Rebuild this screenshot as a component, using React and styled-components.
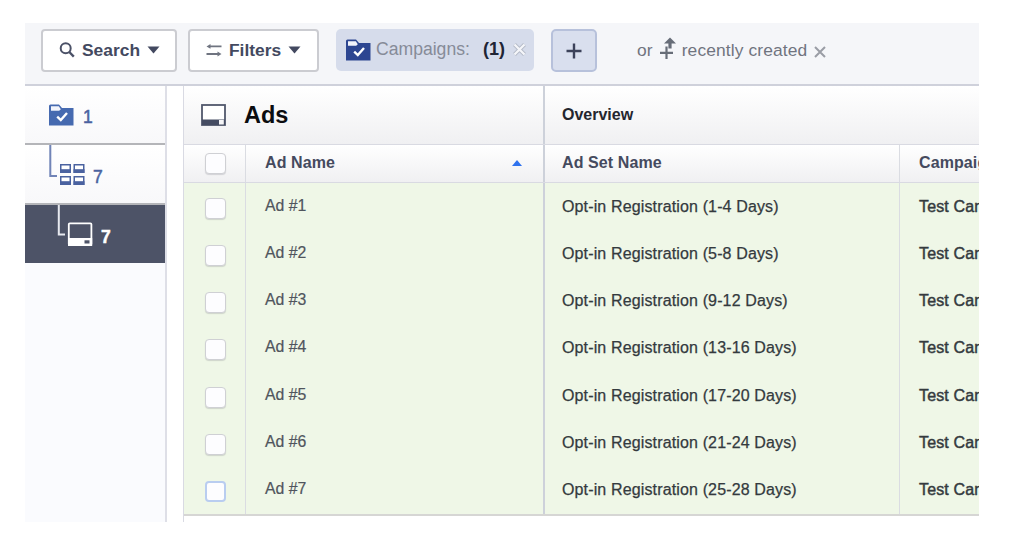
import React from 'react';
import styled, { createGlobalStyle } from 'styled-components';

const GlobalStyle = createGlobalStyle`
  * { box-sizing: border-box; }
  body { margin: 0; background: #fff; font-family: "Liberation Sans", Arial, sans-serif; }
  svg { display: block; flex: none; }
`;

const Page = styled.div`
  width: 1024px;
  height: 550px;
  padding: 23px 45px 28px 25px;
  overflow: hidden;
`;

const Panel = styled.div`
  width: 954px;
  height: 499px;
  display: flex;
  flex-direction: column;
  overflow: hidden;
`;

const Toolbar = styled.div`
  height: 63px;
  flex: none;
  display: flex;
  align-items: flex-start;
  padding: 6px 0 0 16px;
  background: #f5f6f9;
  border-bottom: 2px solid #cfd1db;
  white-space: nowrap;
`;

const MenuButton = styled.button`
  width: ${(p) => p.$width}px;
  height: 43px;
  margin-right: ${(p) => p.$gap}px;
  padding: 0 0 1px 16px;
  display: flex;
  align-items: center;
  gap: 7px;
  border: 2px solid #cbccd1;
  border-radius: 4px;
  background: #fff;
  color: #434960;
  font: bold 17.4px "Liberation Sans", Arial, sans-serif;
`;

const FilterTag = styled.div`
  width: 198px;
  height: 42px;
  margin-right: 17px;
  padding: 0 0 1px 10px;
  display: flex;
  align-items: center;
  border-radius: 5px;
  background: #d6dceb;
`;

const TagName = styled.span`
  width: 111px;
  padding-left: 5px;
  color: #868b98;
  font-size: 17.6px;
`;

const TagCount = styled.span`
  width: 31px;
  padding-left: 1px;
  color: #202434;
  font-size: 18px;
  font-weight: bold;
`;

const AddButton = styled.button`
  width: 46px;
  height: 43px;
  padding: 0;
  display: grid;
  place-items: center;
  border: 2px solid #b7c1db;
  border-radius: 5px;
  background: #d9dfee;
`;

const RecentHint = styled.div`
  height: 43px;
  margin-left: 40px;
  display: flex;
  align-items: center;
  color: #70747f;
  font-size: 17.4px;
  letter-spacing: 0.12px;
`;

const HintText = styled.span`
  padding-right: 7px;
`;

const PublishSlot = styled.span`
  width: 22px;
  padding-bottom: 6px;
`;

const CloseSlot = styled.span`
  padding-top: 3px;
`;

const Body = styled.div`
  flex: 1;
  display: flex;
  min-height: 0;
`;

const Sidebar = styled.nav`
  width: 142px;
  flex: none;
  border-right: 2px solid #dedfe7;
  background: #fafbfe;
`;

const Level = styled.div`
  height: ${(p) => p.$height}px;
  padding: ${(p) => p.$pad};
  display: flex;
  align-items: flex-start;
  gap: ${(p) => p.$gap}px;
  color: ${(p) => (p.$active ? '#fff' : '#4a62a0')};
  background: ${(p) => (p.$active ? '#4d5367' : 'linear-gradient(#fff, #f8f8fa)')};
  border-bottom: ${(p) => (p.$active ? '0' : '2px solid #b4b5b9')};
`;

const LevelCount = styled.span`
  padding-top: ${(p) => p.$top}px;
  font-size: 17.5px;
  line-height: 20px;
  font-weight: ${(p) => (p.$bold ? 'bold' : 'normal')};
  -webkit-text-stroke: 0.5px currentColor;
`;

const Table = styled.section`
  flex: 1;
  min-width: 0;
  margin-left: 16px;
  display: flex;
  flex-direction: column;
  border-left: 1px solid #d9dae3;
  overflow: hidden;
`;

const Row = styled.div`
  display: grid;
  grid-template-columns: 62px 299px 355px 79px;
  flex: ${(p) => (p.$height ? 'none' : '1')};
  height: ${(p) => (p.$height ? `${p.$height}px` : 'auto')};
  background: ${(p) => (p.$header ? 'linear-gradient(#fff, #f0f0f2)' : 'transparent')};
  border-bottom: ${(p) => (p.$header ? '1px solid #d9dae2' : '0')};
`;

const Rows = styled.div`
  height: 333px;
  flex: none;
  display: flex;
  flex-direction: column;
  background: #eff7e7;
  border-bottom: 2px solid #d6d6d4;
`;

const Cell = styled.div`
  display: flex;
  align-items: center;
  min-width: 0;
  overflow: hidden;
  white-space: nowrap;
  padding-left: ${(p) => p.$pad ?? 17}px;
  padding-bottom: ${(p) => p.$lift ?? 0}px;
  border-right: ${(p) => p.$rule ?? 0}px solid ${(p) => (p.$rule === 2 ? '#cdd1da' : '#dadce2')};
`;

const TitleCell = styled(Cell)`
  grid-column: span 2;
  gap: 18px;
`;

const OverviewCell = styled(Cell)`
  grid-column: span 2;
`;

const Title = styled.h1`
  margin: 0;
  font-size: 23.5px;
  line-height: 28px;
  color: #0b0c10;
`;

const GroupLabel = styled.span`
  font-size: 16px;
  font-weight: bold;
  color: #24262e;
`;

const ColumnLabel = styled.span`
  font-size: 16px;
  font-weight: bold;
  letter-spacing: 0.1px;
  color: #454a5e;
`;

const AdName = styled.span`
  font-size: 15.8px;
  color: #50555d;
  -webkit-text-stroke: 0.2px currentColor;
`;

const Value = styled.span`
  font-size: 16px;
  letter-spacing: 0.14px;
  color: #343a3e;
  -webkit-text-stroke: ${(p) => (p.$strong ? 0.45 : 0.25)}px currentColor;
`;

const Checkbox = styled.span`
  width: 21px;
  height: 21px;
  margin-top: ${(p) => (p.$header ? 0 : 3)}px;
  border: ${(p) => (p.$focused ? '2px solid #b9cdf0' : '1px solid #cfd0d4')};
  border-radius: 4px;
  background: #fdfdff;
  box-shadow: ${(p) => (p.$focused ? 'none' : '0 1px 1px rgba(80, 80, 95, 0.2)')};
`;

const SortArrow = styled.span`
  margin-left: auto;
  margin-right: 21px;
  border: 5.5px solid transparent;
  border-top: 0;
  border-bottom: 6px solid #2f72ee;
`;

const SearchIcon = () => (
  <svg width="16" height="16" viewBox="0 0 16 16" fill="none" stroke="#4b5167" strokeWidth="2">
    <circle cx="6.7" cy="6.3" r="5" />
    <path d="M10.3 10 14.8 14.6" strokeWidth="2.4" />
  </svg>
);

const SlidersIcon = () => (
  <svg width="16" height="14" viewBox="0 0 16 14" fill="#6f7480">
    <path d="M.5 3.4 4.5 1V2.5H15.5V4.3H4.5V5.8Z" />
    <path d="M15.5 11 11.5 8.6V10.1H.5V11.9H11.5V13.4Z" />
  </svg>
);

const Caret = () => (
  <svg width="13" height="8" viewBox="0 0 13 8" fill="#434960">
    <path d="M.5.5H12.5L6.5 7.5Z" />
  </svg>
);

const FolderIcon = ({ color }) => (
  <svg width="25" height="22" viewBox="0 0 25 22">
    <path d="M0 2Q0 .5 1.5.5H10L13 4H24.5V21.5H0Z" fill={color} />
    <path d="M2 2.2H9.8L11.8 5.2 10.2 6.8H2Z" fill="#f2f4fb" />
    <path d="M8.2 12.6 11.8 16 18 9" fill="none" stroke="#fff" strokeWidth="2.4" />
  </svg>
);

const Cross = () => (
  <svg width="12" height="12" viewBox="0 0 12 12" fill="none" stroke="#9a9da5" strokeWidth="2">
    <path d="M1 1 11 11M11 1 1 11" />
  </svg>
);

const PaleCross = () => (
  <svg width="13" height="13" viewBox="0 0 13 13" fill="none">
    <path d="M1.5 1.5 11.5 11.5M11.5 1.5 1.5 11.5" stroke="#b5bbc8" strokeWidth="4" />
    <path d="M1.5 1.5 11.5 11.5M11.5 1.5 1.5 11.5" stroke="#f5f6fa" strokeWidth="2.2" />
  </svg>
);

const PlusIcon = () => (
  <svg width="16" height="16" viewBox="0 0 16 16" stroke="#3c425a" strokeWidth="2.4">
    <path d="M8 .5V15.5M.5 8H15.5" />
  </svg>
);

const PublishIcon = () => (
  <svg width="18" height="24" viewBox="0 0 18 24" fill="none" stroke="#676d78">
    <path d="M0 16.8H13M6.5 10.5V23" strokeWidth="2.2" />
    <path d="M10 5V12.5" strokeWidth="3.2" />
    <path d="M4 7.4 10 1.4 16 7.4Z" fill="#676d78" stroke="none" />
  </svg>
);

const BranchGridIcon = () => (
  <svg width="36" height="43" viewBox="0 0 36 43">
    <path d="M1.3 0V31H8" fill="none" stroke="#7184b7" strokeWidth="2" />
    {[[11, 19], [24.5, 19], [11, 31], [24.5, 31]].map(([x, y]) => (
      <g key={`${x}-${y}`}>
        <rect x={x + 0.75} y={y + 0.75} width="9.5" height="7.5" fill="#fff" stroke="#4a62a0" strokeWidth="1.5" />
        <rect x={x} y={y + 5.2} width="11" height="3.8" fill="#4a62a0" />
      </g>
    ))}
  </svg>
);

const BranchScreenIcon = () => (
  <svg width="36" height="43" viewBox="0 0 36 43">
    <path d="M1.8 0V29.5H8" fill="none" stroke="#e7e9ef" strokeWidth="2" />
    <rect x="11.8" y="18.3" width="22.6" height="21.7" rx="1" fill="none" stroke="#fff" strokeWidth="1.8" />
    <path d="M11 33H35.2V41H11Z" fill="#fff" />
    <rect x="27.5" y="35.3" width="5" height="3.2" fill="#4d5367" />
  </svg>
);

const ScreenIcon = () => (
  <svg width="25" height="22" viewBox="0 0 25 22">
    <rect x="1" y="1" width="23" height="20" fill="#fff" stroke="#51586c" strokeWidth="1.8" />
    <path d="M1 15.5H24V21H1Z" fill="#454c62" />
    <rect x="18" y="16" width="4.8" height="4.5" fill="#f5f5f7" />
  </svg>
);

const ads = [
  ['Ad #1', '1-4'],
  ['Ad #2', '5-8'],
  ['Ad #3', '9-12'],
  ['Ad #4', '13-16'],
  ['Ad #5', '17-20'],
  ['Ad #6', '21-24'],
  ['Ad #7', '25-28'],
];

export default function App() {
  return (
    <Page>
      <GlobalStyle />
      <Panel>
        <Toolbar>
          <MenuButton $width={136} $gap={11}><SearchIcon />Search<Caret /></MenuButton>
          <MenuButton $width={131} $gap={17}><SlidersIcon />Filters<Caret /></MenuButton>
          <FilterTag>
            <FolderIcon color="#2d4691" />
            <TagName>Campaigns:</TagName>
            <TagCount>(1)</TagCount>
            <PaleCross />
          </FilterTag>
          <AddButton><PlusIcon /></AddButton>
          <RecentHint>
            <HintText>or</HintText>
            <PublishSlot><PublishIcon /></PublishSlot>
            <HintText>recently created</HintText>
            <CloseSlot><Cross /></CloseSlot>
          </RecentHint>
        </Toolbar>
        <Body>
          <Sidebar>
            <Level $height={59} $pad="18px 0 0 24px" $gap={9}>
              <FolderIcon color="#466ab0" />
              <LevelCount $top={3}>1</LevelCount>
            </Level>
            <Level $height={60} $pad="0 0 0 24px" $gap={8}>
              <BranchGridIcon />
              <LevelCount $top={22}>7</LevelCount>
            </Level>
            <Level $height={58} $pad="0 0 0 32px" $gap={8} $active>
              <BranchScreenIcon />
              <LevelCount $top={22} $bold>7</LevelCount>
            </Level>
          </Sidebar>
          <Table>
            <Row $height={59} $header>
              <TitleCell $rule={2}><ScreenIcon /><Title>Ads</Title></TitleCell>
              <OverviewCell><GroupLabel>Overview</GroupLabel></OverviewCell>
            </Row>
            <Row $height={38} $header>
              <Cell $pad={21} $rule={1}><Checkbox $header /></Cell>
              <Cell $pad={19} $rule={2} $lift={2}><ColumnLabel>Ad Name</ColumnLabel><SortArrow /></Cell>
              <Cell $rule={1} $lift={2}><ColumnLabel>Ad Set Name</ColumnLabel></Cell>
              <Cell $pad={19} $lift={2}><ColumnLabel>Campaign</ColumnLabel></Cell>
            </Row>
            <Rows>
              {ads.map(([name, days], i) => (
                <Row key={name}>
                  <Cell $pad={21} $rule={1}><Checkbox $focused={i === 6} /></Cell>
                  <Cell $pad={19} $rule={2} $lift={2}><AdName>{name}</AdName></Cell>
                  <Cell $rule={1}><Value>Opt-in Registration ({days} Days)</Value></Cell>
                  <Cell $pad={19}><Value $strong>Test Campaign</Value></Cell>
                </Row>
              ))}
            </Rows>
          </Table>
        </Body>
      </Panel>
    </Page>
  );
}
